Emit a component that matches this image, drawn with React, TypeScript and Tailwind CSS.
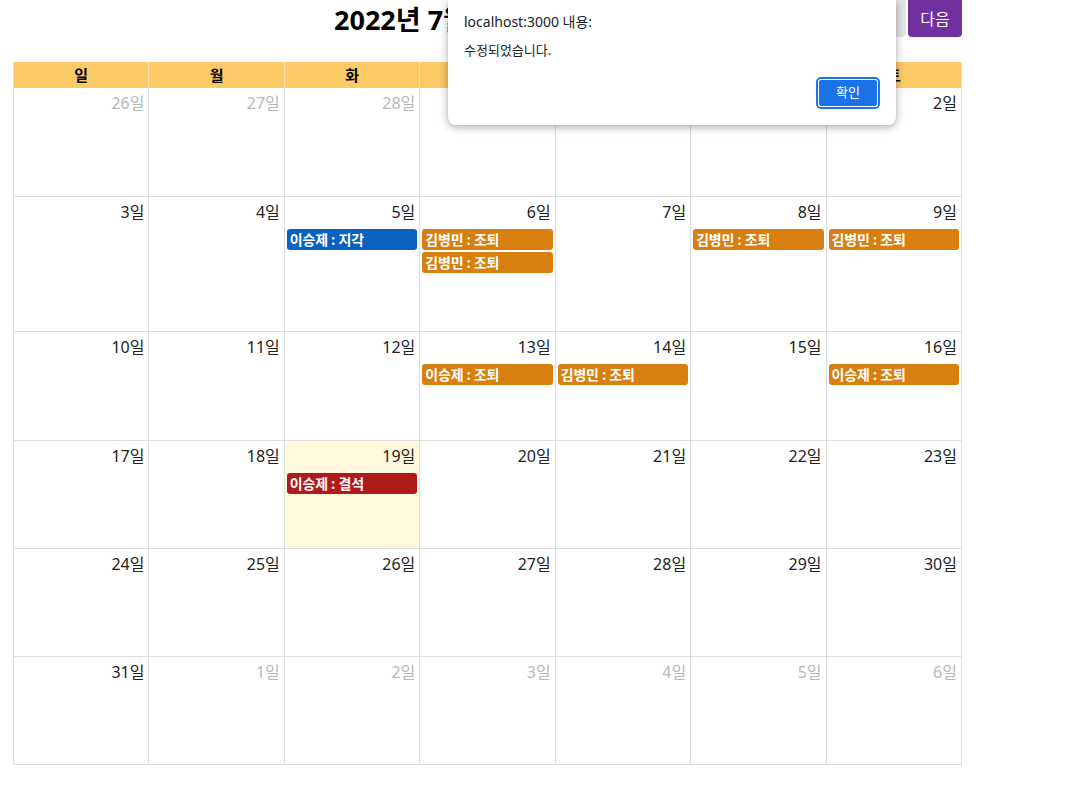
import React from "react";

type Ev = { text: string; color: string };
type Day = { d: number; muted?: boolean; today?: boolean; events?: Ev[] };

const BLUE = "bg-[#0963be]";
const ORANGE = "bg-[#d8800f]";
const RED = "bg-[#b11a1b]";

const jo = (name: string): Ev => ({ text: `${name} : 조퇴`, color: ORANGE });

const weeks: Day[][] = [
  [
    { d: 26, muted: true },
    { d: 27, muted: true },
    { d: 28, muted: true },
    { d: 29, muted: true },
    { d: 30, muted: true },
    { d: 1 },
    { d: 2 },
  ],
  [
    { d: 3 },
    { d: 4 },
    { d: 5, events: [{ text: "이승제 : 지각", color: BLUE }] },
    { d: 6, events: [jo("김병민"), jo("김병민")] },
    { d: 7 },
    { d: 8, events: [jo("김병민")] },
    { d: 9, events: [jo("김병민")] },
  ],
  [
    { d: 10 },
    { d: 11 },
    { d: 12 },
    { d: 13, events: [jo("이승제")] },
    { d: 14, events: [jo("김병민")] },
    { d: 15 },
    { d: 16, events: [jo("이승제")] },
  ],
  [
    { d: 17 },
    { d: 18 },
    { d: 19, today: true, events: [{ text: "이승제 : 결석", color: RED }] },
    { d: 20 },
    { d: 21 },
    { d: 22 },
    { d: 23 },
  ],
  [{ d: 24 }, { d: 25 }, { d: 26 }, { d: 27 }, { d: 28 }, { d: 29 }, { d: 30 }],
  [
    { d: 31 },
    { d: 1, muted: true },
    { d: 2, muted: true },
    { d: 3, muted: true },
    { d: 4, muted: true },
    { d: 5, muted: true },
    { d: 6, muted: true },
  ],
];

// row heights as measured
const rowH = ["h-[109px]", "h-[135px]", "h-[109px]", "h-[108px]", "h-[108px]", "h-[108px]"];

const dows = ["일", "월", "화", "수", "목", "금", "토"];

function Cell({ day, h }: { day: Day; h: string }) {
  return (
    <div
      className={`${h} border-r border-b border-[#dddddd] ${day.today ? "bg-[#fff8dc]" : "bg-white"}`}
    >
      <div
        className={`h-[32px] pr-[4px] pt-[3px] text-right text-[16px] leading-[24px] ${
          day.muted ? "text-[#b8b8b8]" : "text-[#222]"
        }`}
      >
        {day.d}일
      </div>
      <div className="flex flex-col gap-[2px] pl-[2px] pr-[2px]">
        {day.events?.map((e, i) => (
          <div
            key={i}
            className={`${e.color} h-[21px] rounded-[3px] pl-[3px] text-[14px] font-bold leading-[21px] tracking-[-0.2px] text-white`}
          >
            {e.text}
          </div>
        ))}
      </div>
    </div>
  );
}

export default function App() {
  return (
    <div
      className="relative h-[810px] w-[1065px] bg-white"
      style={{ fontFamily: '"Noto Sans", "Noto Sans CJK KR", sans-serif' }}
    >
      <div className="ml-[13px] w-[949px]">
        {/* toolbar */}
        <div className="flex h-[62px] items-start">
          <h1 className="ml-[321px] mt-[1px] text-[27px] font-bold leading-[38px] text-black">
            2022년 7월
          </h1>
          <div className="ml-auto flex gap-[2px]">
            <button className="h-[37px] w-[64px] rounded-b-[4px] bg-[#e4e4e4] text-[16px] text-[#333]">
              오늘
            </button>
            <button className="h-[37px] w-[54px] rounded-b-[4px] bg-[#7030a0] text-[16px] text-white">
              다음
            </button>
          </div>
        </div>

        {/* weekday header */}
        <div className="grid grid-cols-7 border-l border-[#dddddd] bg-[#fcca66]">
          {dows.map((d, i) => (
            <div
              key={d}
              className={`h-[26px] text-center text-[15px] font-bold leading-[26px] text-black ${
                i < 6 ? "border-r border-[#fde2a6]" : "border-r border-[#dddddd]"
              }`}
            >
              {d}
            </div>
          ))}
        </div>

        {/* weeks */}
        <div className="border-l border-[#dddddd]">
          {weeks.map((w, wi) => (
            <div key={wi} className="grid grid-cols-7">
              {w.map((day, di) => (
                <Cell key={di} day={day} h={rowH[wi]} />
              ))}
            </div>
          ))}
        </div>
      </div>

      {/* browser alert dialog */}
      <div className="absolute left-[448px] top-0 h-[125px] w-[448px] rounded-b-[8px] bg-white shadow-[0_2px_8px_rgba(0,0,0,0.35)]">
        <div className="pl-[16px] pt-[12px] text-[14px] leading-[20px] text-[#202124]">
          localhost:3000 내용:
        </div>
        <div className="pl-[16px] pt-[9px] text-[13px] leading-[18px] text-[#202124]">
          수정되었습니다.
        </div>
        <div className="flex justify-end pr-[16px] pt-[18px]">
          <div className="h-[32px] w-[64px] rounded-[5px] border-2 border-[#1a73e8]">
            <button className="h-full w-full rounded-[3px] border border-white bg-[#1a73e8] text-[13px] text-white">
              확인
            </button>
          </div>
        </div>
      </div>
    </div>
  );
}
